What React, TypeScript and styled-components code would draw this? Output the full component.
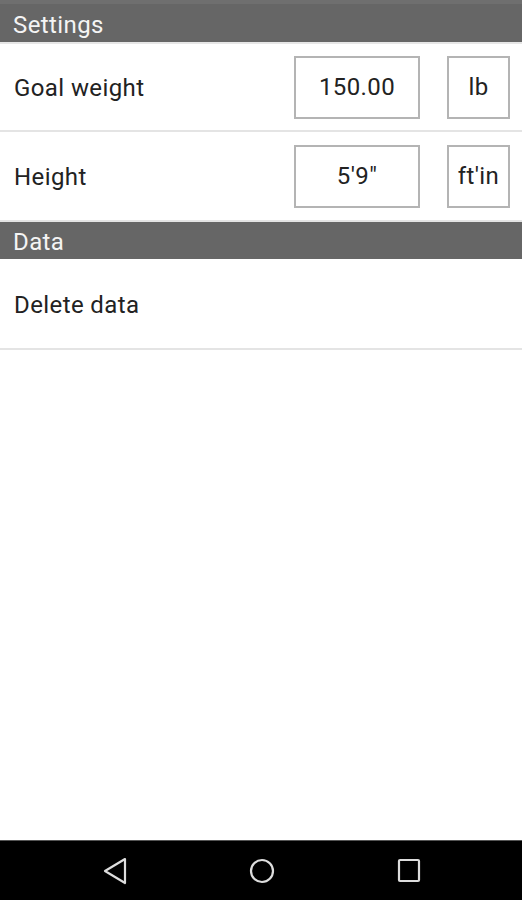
import React from 'react';
import styled, { createGlobalStyle } from 'styled-components';

const Global = createGlobalStyle`
  html, body {
    margin: 0;
    padding: 0;
    background: #fff;
    font-family: Roboto, "Noto Sans", sans-serif;
  }
`;

const Screen = styled.div`
  width: 522px;
  height: 900px;
  display: flex;
  flex-direction: column;
  background: #fff;
  overflow: hidden;
`;

const Content = styled.div`
  flex: 1;
  display: flex;
  flex-direction: column;
`;

const SectionHeader = styled.div<{ $first?: boolean }>`
  height: ${p => (p.$first ? '42px' : '37px')};
  background: #666666;
  color: #f4f4f4;
  font-size: 24px;
  letter-spacing: 0.4px;
  line-height: 1;
  padding-left: 13px;
  display: flex;
  align-items: flex-end;
  padding-bottom: 5px;
  box-sizing: border-box;
  border-top: ${p => (p.$first ? '4px solid #6f6f6f' : 'none')};
`;

const Row = styled.div<{ $h?: number; $top?: boolean }>`
  height: ${p => p.$h ?? 88}px;
  display: flex;
  align-items: center;
  padding: 0 12px 0 14px;
  border-top: ${p => (p.$top ? '2px solid #e6e6e6' : 'none')};
  border-bottom: 2px solid #e4e4e4;
  box-sizing: border-box;
`;

const Label = styled.div`
  flex: 1;
  font-size: 24px;
  letter-spacing: 0.4px;
  color: #222;
  padding-top: 2px;
`;

const Box = styled.div<{ $w: number }>`
  width: ${p => p.$w}px;
  height: 63px;
  box-sizing: border-box;
  border: 2px solid #b4b4b4;
  display: flex;
  align-items: center;
  justify-content: center;
  font-size: 24px;
  letter-spacing: 0.4px;
  color: #222;
`;

const Gap = styled.div`
  width: 27px;
`;

const NavBar = styled.div`
  height: 60px;
  background: #000;
  border-top: 1px solid #555;
  box-sizing: border-box;
  display: flex;
  align-items: center;
  justify-content: center;
  gap: 117px;
  padding-left: 2px;
`;

const NavIcon = styled.svg`
  width: 30px;
  height: 30px;
  display: block;
`;

export default function App() {
  return (
    <Screen>
      <Global />
      <Content>
        <SectionHeader $first>Settings</SectionHeader>
        <Row $h={90} $top>
          <Label>Goal weight</Label>
          <Box $w={126}>150.00</Box>
          <Gap />
          <Box $w={63}>lb</Box>
        </Row>
        <Row $h={90}>
          <Label>Height</Label>
          <Box $w={126}>5'9"</Box>
          <Gap />
          <Box $w={63}>ft'in</Box>
        </Row>
        <SectionHeader>Data</SectionHeader>
        <Row $h={91}>
          <Label>Delete data</Label>
        </Row>
      </Content>
      <NavBar>
        <NavIcon viewBox="0 0 30 30">
          <path d="M25 3 L5 15 L25 27 Z" fill="none" stroke="#ddd" strokeWidth="2.2" strokeLinejoin="round" />
        </NavIcon>
        <NavIcon viewBox="0 0 30 30">
          <circle cx="15" cy="15" r="11" fill="none" stroke="#ddd" strokeWidth="2.2" />
        </NavIcon>
        <NavIcon viewBox="0 0 30 30">
          <rect x="5" y="4" width="20" height="21" rx="1" fill="none" stroke="#ddd" strokeWidth="2.2" />
        </NavIcon>
      </NavBar>
    </Screen>
  );
}
